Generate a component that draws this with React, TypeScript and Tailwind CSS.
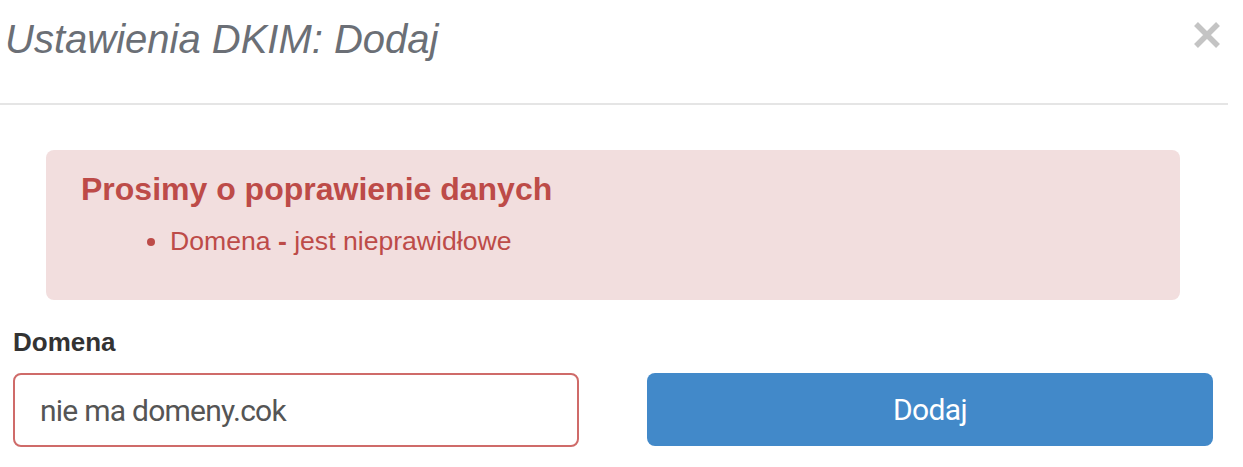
import React from 'react';

const CloseIcon: React.FC = () => (
  <svg width="28" height="28" viewBox="0 0 28 28" className="text-[#c4c4c4]">
    <path d="M3 3 L25 25 M25 3 L3 25" stroke="currentColor" strokeWidth="5.5" strokeLinecap="butt" />
  </svg>
);

export default function App() {
  return (
    <div className="w-[1228px] bg-white font-['Liberation_Sans',Arial,sans-serif]">
      <div className="h-[105px] border-b-2 border-[#e5e5e5] flex items-start justify-between pl-[5px] pr-[7px]">
        <h1 className="mt-[19px] text-[40px] leading-[40px] italic text-[#6b6f76]">Ustawienia DKIM: Dodaj</h1>
        <button className="mt-[21px]">
          <CloseIcon />
        </button>
      </div>

      <div className="pl-[13px] pr-[15px] pt-[45px]">
        <div className="mx-[33px] h-[150px] rounded-[8px] bg-[#f2dede] pl-[35px] pt-[23px] text-[#bd4b48]">
          <h4 className="text-[32px] leading-[32px] font-bold">Prosimy o poprawienie danych</h4>
          <ul className="mt-[23px] pl-[89px] list-disc marker:text-[#bd4b48]">
            <li className="text-[26.6px] leading-[26px]">
              Domena <b>-</b> jest nieprawidłowe
            </li>
          </ul>
        </div>

        <label className="block mt-[30px] text-[26px] leading-[25px] font-bold text-[#333]">Domena</label>

        <div className="mt-[18px] grid grid-cols-2 gap-[68px]">
          <div className="h-[74px] rounded-[8px] border-2 border-[#cf6b69] flex items-center pl-[25px] font-['Roboto',sans-serif] text-[30px] tracking-[-0.75px] text-[#555]">
            nie ma domeny.cok
          </div>
          <button className="h-[73px] rounded-[8px] bg-[#4289c9] text-white font-['Roboto',sans-serif] text-[30px] tracking-[-0.6px]">
            Dodaj
          </button>
        </div>
      </div>
    </div>
  );
}
